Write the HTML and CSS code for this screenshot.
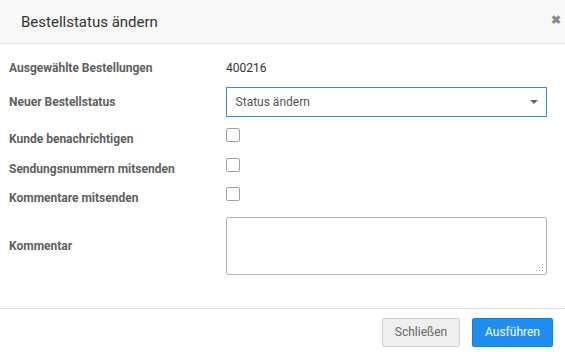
FILE: index.html
```html
<!DOCTYPE html>
<html lang="de">
<head>
    <meta charset="UTF-8">
    <title>Bestellstatus ändern</title>
    <link rel="stylesheet" href="styles.css">
</head>
<body>
    <div class="modal">
        <div class="modal-header">
            <h4 class="modal-title">Bestellstatus ändern</h4>
            <span class="close">&#10006;</span>
        </div>
        <div class="modal-body">
            <div class="row row-text">
                <label>Ausgewählte Bestellungen</label>
                <div class="value">400216</div>
            </div>
            <div class="row row-select">
                <label>Neuer Bestellstatus</label>
                <div class="select">
                    <span>Status ändern</span>
                    <span class="caret"></span>
                </div>
            </div>
            <div class="row row-check">
                <label>Kunde benachrichtigen</label>
                <span class="checkbox"></span>
            </div>
            <div class="row row-check">
                <label>Sendungsnummern mitsenden</label>
                <span class="checkbox"></span>
            </div>
            <div class="row row-check">
                <label>Kommentare mitsenden</label>
                <span class="checkbox"></span>
            </div>
            <div class="row row-area">
                <label>Kommentar</label>
                <textarea class="textarea"></textarea>
            </div>
        </div>
        <div class="modal-footer">
            <button class="btn btn-default">Schließen</button>
            <button class="btn btn-primary">Ausführen</button>
        </div>
    </div>
</body>
</html>
```

FILE: styles.css
```css
body {
    margin: 0;
    font-family: Roboto, "Liberation Sans", Arial, sans-serif;
    background: #fff;
    color: #333;
}
.modal {
    width: 565px;
    height: 352px;
    background: #fff;
}
.modal-header {
    display: flex;
    align-items: center;
    justify-content: space-between;
    height: 43px;
    padding: 0 4px 0 21px;
    background: #f8f8f8;
    border-bottom: 1px solid #e5e5e5;
}
.modal-title {
    margin: 0;
    font-size: 15px;
    font-weight: normal;
    color: #333;
}
.close {
    font-size: 12px;
    font-weight: bold;
    color: #8a8a8a;
    margin-top: -3px;
}
.modal-body {
    padding: 14px 18px 33px 9px;
    border-bottom: 1px solid #e5e5e5;
}
.row {
    display: flex;
    align-items: center;
}
.row label {
    width: 217px;
    font-size: 12px;
    line-height: 14px;
    font-weight: bold;
    color: #5e5e5e;
}
.row-text {
    height: 20px;
}
.value {
    font-size: 12px;
    color: #333;
}
.row-select {
    margin-top: 9px;
    height: 30px;
    margin-bottom: 3px;
}
.select {
    box-sizing: border-box;
    width: 322px;
    height: 30px;
    border: 1px solid #3a8fd9;
    display: flex;
    align-items: center;
    justify-content: space-between;
    padding: 0 8px 0 9px;
    font-size: 12px;
    color: #555;
}
.caret {
    width: 0;
    height: 0;
    border-left: 4px solid transparent;
    border-right: 4px solid transparent;
    border-top: 4px solid #666;
}
.row-check {
    height: 29.5px;
    align-items: flex-start;
}
.row-check label {
    padding-top: 12px;
}
.checkbox {
    box-sizing: border-box;
    width: 14px;
    height: 14px;
    margin-top: 8px;
    border: 1px solid #a0a0a0;
    border-radius: 2px;
    background: #fff;
}
.row-area {
    margin-top: 8px;
}
.textarea {
    display: block;
    box-sizing: border-box;
    width: 322px;
    height: 58px;
    margin: 0;
    border: 1px solid #b3b3b3;
    border-radius: 2px;
    font-family: inherit;
    resize: none;
    background: #fff url("data:image/svg+xml,%3Csvg xmlns='http://www.w3.org/2000/svg' width='7' height='7'%3E%3Cg fill='%23999'%3E%3Crect x='6' y='0' width='1' height='1'/%3E%3Crect x='3' y='3' width='1' height='1'/%3E%3Crect x='6' y='3' width='1' height='1'/%3E%3Crect x='0' y='6' width='1' height='1'/%3E%3Crect x='3' y='6' width='1' height='1'/%3E%3Crect x='6' y='6' width='1' height='1'/%3E%3C/g%3E%3C/svg%3E") no-repeat right 3px bottom 3px;
}
.modal-footer {
    display: flex;
    justify-content: flex-end;
    gap: 12px;
    padding: 9px 12px 0 0;
}
.btn {
    box-sizing: border-box;
    height: 29px;
    border-radius: 2px;
    font-family: inherit;
    font-size: 12px;
    cursor: pointer;
}
.btn-default {
    width: 78px;
    background: #efefef;
    border: 1px solid #d0d0d0;
    color: #666;
}
.btn-primary {
    width: 81px;
    background: #1e8ff0;
    border: 1px solid #1a7fd6;
    color: #fff;
}
```
